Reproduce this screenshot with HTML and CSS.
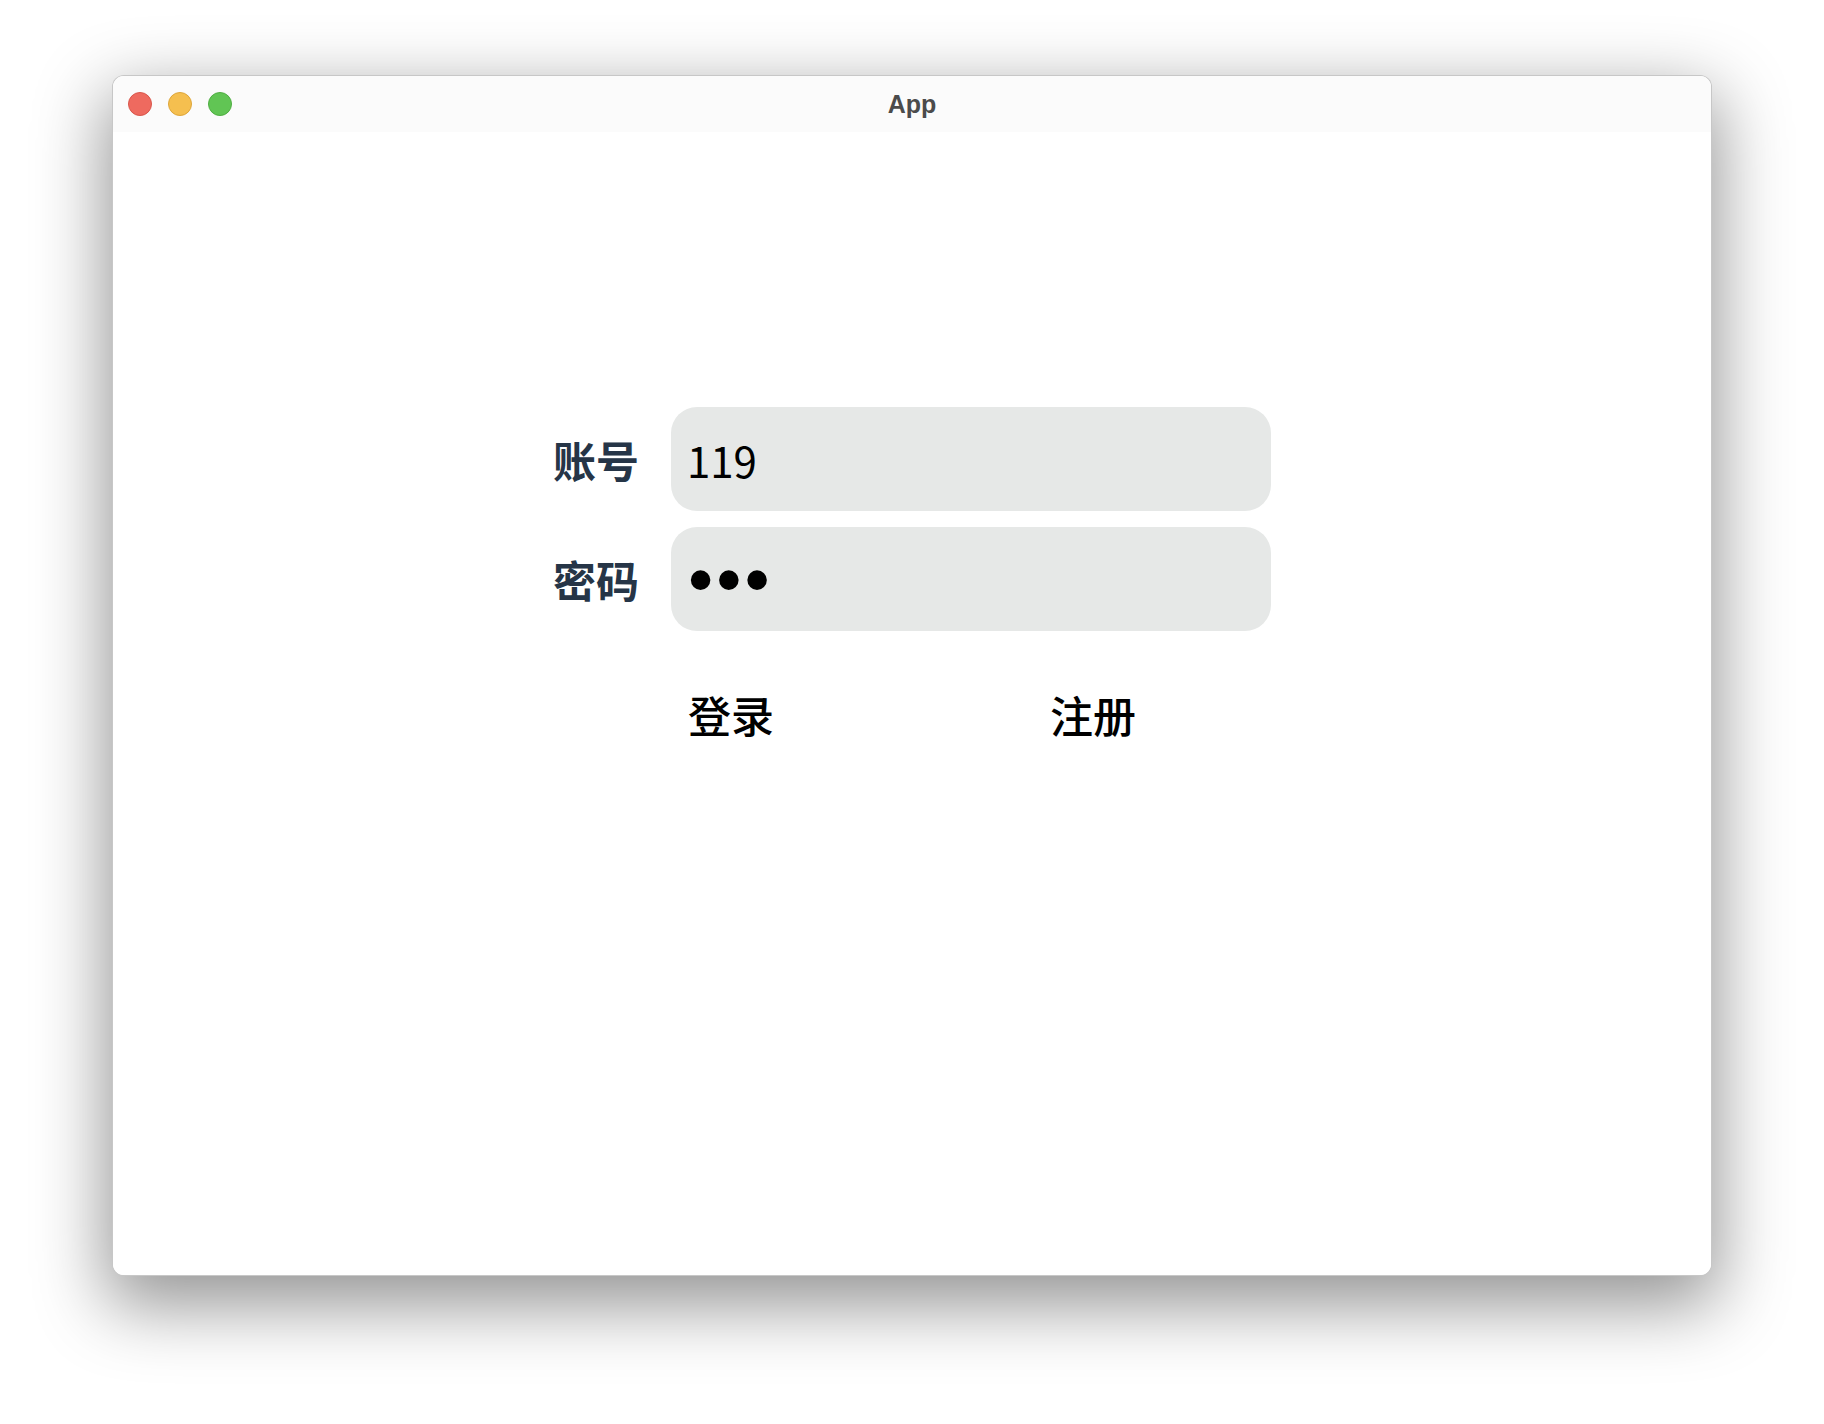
FILE: index.html
```html
<!DOCTYPE html>
<html lang="zh-CN">
<head>
<meta charset="utf-8">
<title>App</title>
<link rel="stylesheet" href="styles.css">
</head>
<body>
<div class="window">
  <div class="titlebar">
    <div class="lights">
      <span class="light red"></span>
      <span class="light yellow"></span>
      <span class="light green"></span>
    </div>
    <div class="title">App</div>
  </div>
  <div class="content">
    <form class="form">
      <label class="label" for="acc">账号</label>
      <input class="field" id="acc" type="text" value="119">
      <label class="label" for="pwd">密码</label>
      <input class="field pwd" id="pwd" type="password" value="123">
      <div class="actions">
        <button type="button" class="btn">登录</button>
        <button type="button" class="btn">注册</button>
      </div>
    </form>
  </div>
</div>
</body>
</html>
```

FILE: styles.css
```css
html, body {
  margin: 0;
  padding: 0;
  background: #ffffff;
}
body {
  box-sizing: border-box;
  min-height: 1424px;
  padding: 75px 112px 0;
  font-family: "Noto Sans CJK SC", "Noto Sans", sans-serif;
}
.window {
  width: 1600px;
  height: 1201px;
  box-sizing: border-box;
  border: 1px solid rgba(0, 0, 0, 0.22);
  border-radius: 12px;
  background: #ffffff;
  box-shadow: 0 24px 70px 6px rgba(0, 0, 0, 0.42);
  overflow: hidden;
  display: flex;
  flex-direction: column;
}
.titlebar {
  height: 56px;
  background: #fbfbfb;
  display: flex;
  align-items: center;
  position: relative;
  flex: none;
}
.lights {
  display: flex;
  gap: 16px;
  padding-left: 15px;
}
.light {
  width: 24px;
  height: 24px;
  border-radius: 50%;
  box-sizing: border-box;
}
.red { background: #ee6a5f; border: 1px solid #d9564b; }
.yellow { background: #f5bf4f; border: 1px solid #dea63a; }
.green { background: #61c554; border: 1px solid #4fae42; }
.title {
  position: absolute;
  left: 0;
  right: 0;
  top: 13px;
  text-align: center;
  font-family: "Liberation Sans", Arial, sans-serif;
  font-weight: bold;
  font-size: 25px;
  line-height: 30px;
  color: #4b4b4b;
}
.content {
  flex: 1;
  background: #ffffff;
}
.form {
  width: 718px;
  margin: 275px auto 0;
  display: grid;
  grid-template-columns: 85px 600px;
  column-gap: 33px;
  row-gap: 16px;
  align-items: center;
}
.label {
  font-size: 43px;
  font-weight: bold;
  color: #263547;
  line-height: 1;
  white-space: nowrap;
}
.field {
  height: 104px;
  box-sizing: border-box;
  border: none;
  outline: none;
  border-radius: 26px;
  background: #e6e8e7;
  padding: 0 16px;
  font-family: "Noto Sans CJK SC", "Noto Sans", sans-serif;
  font-size: 42px;
  color: #000000;
  margin: 0;
}
.pwd {
  font-family: "Liberation Sans", Arial, sans-serif;
  font-size: 72px;
  letter-spacing: 3px;
  padding-left: 17px;
}
.actions {
  grid-column: 1 / 3;
  display: flex;
  justify-content: center;
  gap: 276px;
  margin-top: 42px;
}
.btn {
  border: none;
  background: none;
  padding: 0;
  font-family: "Noto Sans CJK SC", sans-serif;
  font-size: 43px;
  font-weight: 500;
  color: #000000;
  line-height: 1.2;
  cursor: pointer;
}
```
